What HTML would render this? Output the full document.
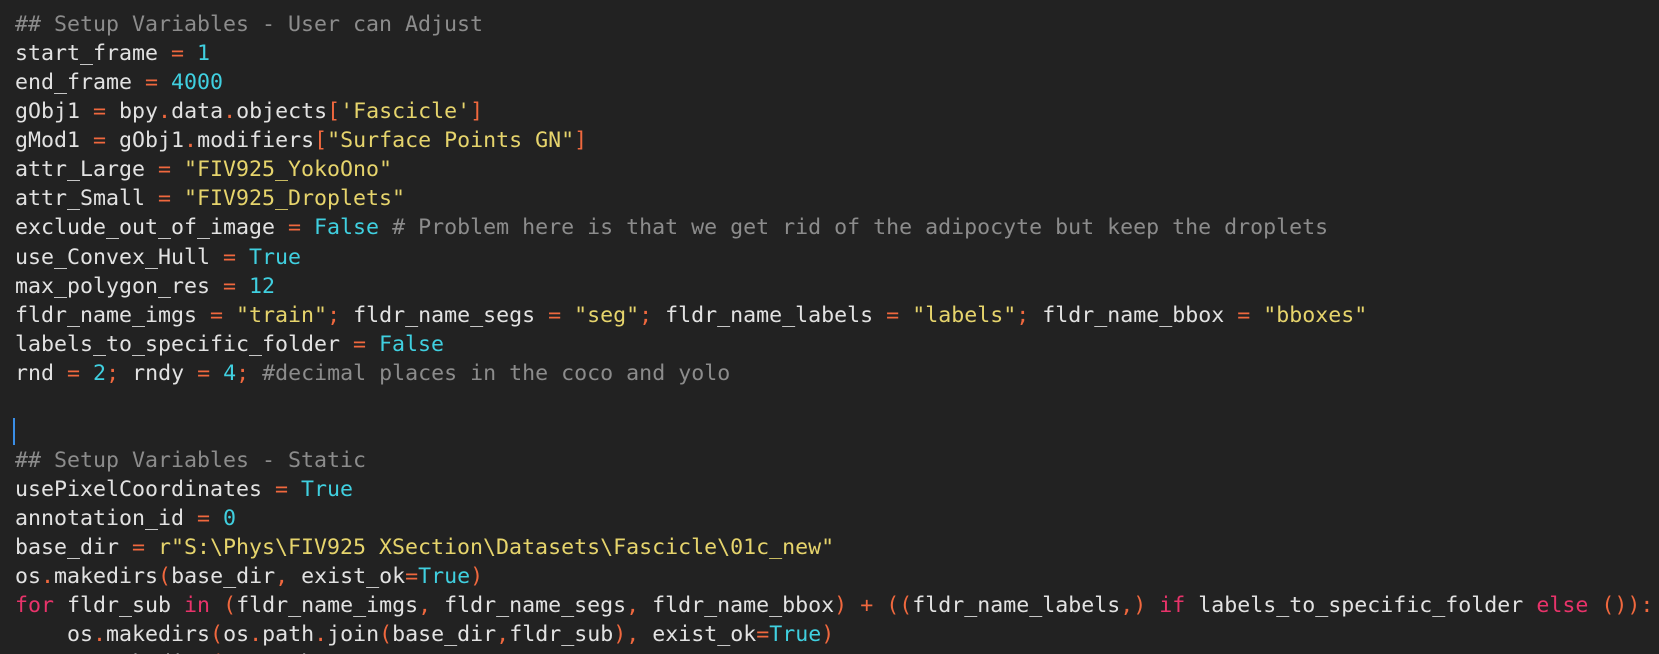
<!DOCTYPE html>
<html><head><meta charset="utf-8"><style>
html,body{margin:0;padding:0;background:#222222;width:1659px;height:654px;overflow:hidden}
pre{margin:0;padding:10px 0 0 15px;font-family:"DejaVu Sans Mono","Liberation Mono",monospace;font-size:21.6px;line-height:29.07px;color:#e2e2e2;white-space:pre}
.c{color:#8c8c8c}.o{color:#f0683e}.n{color:#40d0e0}.s{color:#e6d46c}.k{color:#e8336a}
.cur{display:inline-block;width:2px;height:27px;background:#3a8ee6;vertical-align:middle;margin-left:-2px}
</style></head><body><pre><span class="c">## Setup Variables - User can Adjust</span>
start_frame <span class="o">=</span> <span class="n">1</span>
end_frame <span class="o">=</span> <span class="n">4000</span>
gObj1 <span class="o">=</span> bpy<span class="o">.</span>data<span class="o">.</span>objects<span class="o">[</span><span class="s">'Fascicle'</span><span class="o">]</span>
gMod1 <span class="o">=</span> gObj1<span class="o">.</span>modifiers<span class="o">[</span><span class="s">"Surface Points GN"</span><span class="o">]</span>
attr_Large <span class="o">=</span> <span class="s">"FIV925_YokoOno"</span>
attr_Small <span class="o">=</span> <span class="s">"FIV925_Droplets"</span>
exclude_out_of_image <span class="o">=</span> <span class="n">False</span> <span class="c"># Problem here is that we get rid of the adipocyte but keep the droplets</span>
use_Convex_Hull <span class="o">=</span> <span class="n">True</span>
max_polygon_res <span class="o">=</span> <span class="n">12</span>
fldr_name_imgs <span class="o">=</span> <span class="s">"train"</span><span class="o">;</span> fldr_name_segs <span class="o">=</span> <span class="s">"seg"</span><span class="o">;</span> fldr_name_labels <span class="o">=</span> <span class="s">"labels"</span><span class="o">;</span> fldr_name_bbox <span class="o">=</span> <span class="s">"bboxes"</span>
labels_to_specific_folder <span class="o">=</span> <span class="n">False</span>
rnd <span class="o">=</span> <span class="n">2</span><span class="o">;</span> rndy <span class="o">=</span> <span class="n">4</span><span class="o">;</span> <span class="c">#decimal places in the coco and yolo</span>

<span class="cur"></span>
<span class="c">## Setup Variables - Static</span>
usePixelCoordinates <span class="o">=</span> <span class="n">True</span>
annotation_id <span class="o">=</span> <span class="n">0</span>
base_dir <span class="o">=</span> <span class="s">r"S:\Phys\FIV925 XSection\Datasets\Fascicle\01c_new"</span>
os<span class="o">.</span>makedirs<span class="o">(</span>base_dir<span class="o">,</span> exist_ok<span class="o">=</span><span class="n">True</span><span class="o">)</span>
<span class="k">for</span> fldr_sub <span class="k">in</span> <span class="o">(</span>fldr_name_imgs<span class="o">,</span> fldr_name_segs<span class="o">,</span> fldr_name_bbox<span class="o">)</span> <span class="o">+</span> <span class="o">((</span>fldr_name_labels<span class="o">,)</span> <span class="k">if</span> labels_to_specific_folder <span class="k">else</span> <span class="o">()):</span>
    os<span class="o">.</span>makedirs<span class="o">(</span>os<span class="o">.</span>path<span class="o">.</span>join<span class="o">(</span>base_dir<span class="o">,</span>fldr_sub<span class="o">),</span> exist_ok<span class="o">=</span><span class="n">True</span><span class="o">)</span>
    os<span class="o">.</span>makedirs<span class="o">(</span>os<span class="o">.</span>path</pre></body></html>
